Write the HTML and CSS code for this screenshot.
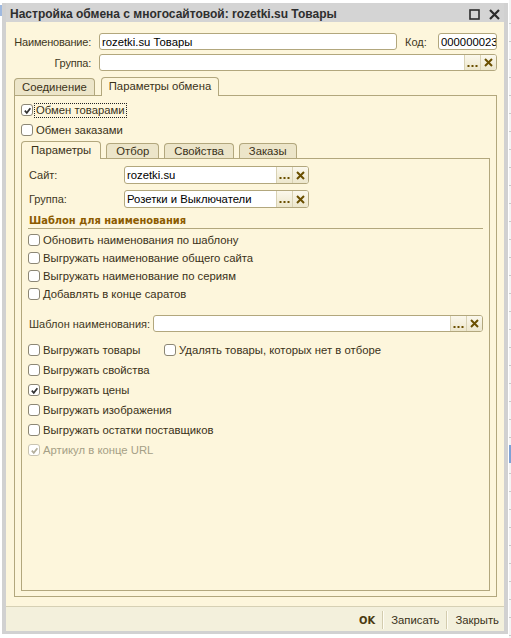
FILE: index.html
```html
<!DOCTYPE html>
<html>
<head>
  <title>Настройка обмена с многосайтовой</title>
  <link rel="stylesheet" href="styles.css">
</head>
<body>

  <svg class="defs" width="0" height="0">
    <symbol id="i-check" viewBox="0 0 10 10">
      <path d="M2 5.2 L4.2 7.6 L8.2 2.6" fill="none" stroke="currentColor" stroke-width="1.9"/>
    </symbol>
    <symbol id="i-dots" viewBox="0 0 11 10">
      <rect x="0.5" y="7" width="2" height="2"/>
      <rect x="4.5" y="7" width="2" height="2"/>
      <rect x="8.5" y="7" width="2" height="2"/>
    </symbol>
    <symbol id="i-clear" viewBox="0 0 9 9">
      <path d="M1 1 L8 8 M8 1 L1 8" fill="none" stroke="currentColor" stroke-width="2"/>
    </symbol>
  </svg>

  <div class="edge-left"><div class="edge-mark"></div></div>

  <div class="window">
    <div class="titlebar">
      <span class="title">Настройка обмена с многосайтовой: rozetki.su Товары</span>
      <span class="winbtns">
        <svg width="11" height="11" viewBox="0 0 11 11"><rect x="1" y="1" width="9" height="9" fill="none" stroke="#2b2b2b" stroke-width="1.6"/></svg>
        <svg width="11" height="11" viewBox="0 0 11 11"><path d="M1 1 L10 10 M10 1 L1 10" fill="none" stroke="#2b2b2b" stroke-width="2.2"/></svg>
      </span>
    </div>

    <div class="form">
      <div class="row">
        <span class="lbl">Наименование:</span>
        <div class="field grow"><span class="val">rozetki.su Товары</span></div>
        <span class="lbl-code">Код:</span>
        <div class="field code"><span class="val">000000023</span></div>
      </div>
      <div class="row">
        <span class="lbl">Группа:</span>
        <div class="field grow">
          <span class="val"></span>
          <span class="btn dots"><svg width="11" height="10"><use href="#i-dots"/></svg></span>
          <span class="btn clear"><svg width="9" height="9"><use href="#i-clear"/></svg></span>
        </div>
      </div>

      <div class="tabs">
        <div class="tab">Соединение</div>
        <div class="tab active">Параметры обмена</div>
      </div>

      <div class="panel">
        <div class="check">
          <span class="cb on"><svg width="10" height="10"><use href="#i-check"/></svg></span>
          <span class="cb-text focus">Обмен товарами</span>
        </div>
        <div class="check">
          <span class="cb"></span>
          <span class="cb-text">Обмен заказами</span>
        </div>

        <div class="tabs inner">
          <div class="tab active">Параметры</div>
          <div class="tab">Отбор</div>
          <div class="tab">Свойства</div>
          <div class="tab">Заказы</div>
        </div>

        <div class="subpanel">
          <div class="frow">
            <span class="lbl2">Сайт:</span>
            <div class="field site">
              <span class="val">rozetki.su</span>
              <span class="btn dots"><svg width="11" height="10"><use href="#i-dots"/></svg></span>
              <span class="btn clear"><svg width="9" height="9"><use href="#i-clear"/></svg></span>
            </div>
          </div>
          <div class="frow">
            <span class="lbl2">Группа:</span>
            <div class="field site">
              <span class="val">Розетки и Выключатели</span>
              <span class="btn dots"><svg width="11" height="10"><use href="#i-dots"/></svg></span>
              <span class="btn clear"><svg width="9" height="9"><use href="#i-clear"/></svg></span>
            </div>
          </div>

          <div class="section">Шаблон для наименования</div>

          <div class="checks tight">
            <div class="check">
              <span class="cb"></span>
              <span class="cb-text">Обновить наименования по шаблону</span>
            </div>
            <div class="check">
              <span class="cb"></span>
              <span class="cb-text">Выгружать наименование общего сайта</span>
            </div>
            <div class="check">
              <span class="cb"></span>
              <span class="cb-text">Выгружать наименование по сериям</span>
            </div>
            <div class="check">
              <span class="cb"></span>
              <span class="cb-text">Добавлять в конце саратов</span>
            </div>
          </div>

          <div class="frow template">
            <span class="lbl2 wide">Шаблон наименования:</span>
            <div class="field grow">
              <span class="val"></span>
              <span class="btn dots"><svg width="11" height="10"><use href="#i-dots"/></svg></span>
              <span class="btn clear"><svg width="9" height="9"><use href="#i-clear"/></svg></span>
            </div>
          </div>

          <div class="checks">
            <div class="check">
              <span class="check-col">
                <span class="cb"></span>
                <span class="cb-text">Выгружать товары</span>
              </span>
              <span class="cb"></span>
              <span class="cb-text">Удалять товары, которых нет в отборе</span>
            </div>
            <div class="check">
              <span class="cb"></span>
              <span class="cb-text">Выгружать свойства</span>
            </div>
            <div class="check">
              <span class="cb on"><svg width="10" height="10"><use href="#i-check"/></svg></span>
              <span class="cb-text">Выгружать цены</span>
            </div>
            <div class="check">
              <span class="cb"></span>
              <span class="cb-text">Выгружать изображения</span>
            </div>
            <div class="check">
              <span class="cb"></span>
              <span class="cb-text">Выгружать остатки поставщиков</span>
            </div>
            <div class="check disabled">
              <span class="cb on"><svg width="10" height="10"><use href="#i-check"/></svg></span>
              <span class="cb-text">Артикул в конце URL</span>
            </div>
          </div>
        </div>
      </div>
    </div>

    <div class="footer">
      <span class="fbtn ok">OK</span>
      <span class="fsep"></span>
      <span class="fbtn">Записать</span>
      <span class="fsep"></span>
      <span class="fbtn last">Закрыть</span>
    </div>
  </div>

  <div class="edge-right"><div class="edge-sel"></div></div>

</body>
</html>
```

FILE: styles.css
```css
body {
  margin: 0;
  background: #fff;
  font: 11px "Liberation Sans", Arial, sans-serif;
  color: #41381c;
  display: flex;
  height: 638px;
  overflow: hidden;
}

.defs {
  position: absolute;
}

/* desktop around the window */
.edge-left {
  width: 2px;
}

.edge-mark {
  margin-top: 5px;
  height: 11px;
  background: #9fb9e0;
}

.edge-right {
  flex: 1;
  margin-left: 1px;
  background: repeating-linear-gradient(to bottom, #f4f4f4 0, #f4f4f4 17px, #c9c9c9 17px, #c9c9c9 18px);
  background-position: 0 6px;
}

.edge-sel {
  margin-top: 445px;
  height: 18px;
  background: #7ea2d6;
}

/* window */
.window {
  width: 506px;
  height: 631px;
  margin-top: 3px;
  box-sizing: border-box;
  border: 4px solid #d1d1d1;
  border-top: 0;
  border-bottom-width: 3px;
  background: #fdf6dc;
  display: flex;
  flex-direction: column;
}

.titlebar {
  height: 19px;
  box-sizing: border-box;
  padding: 4px 4px 0 4px;
  background: #d4d4d4;
  display: flex;
  justify-content: space-between;
}

.title {
  font: bold 12px "Liberation Sans", Arial, sans-serif;
  color: #2e2e2e;
  line-height: 15px;
}

.winbtns {
  display: flex;
  align-items: center;
  gap: 9px;
  height: 15px;
}

.form {
  flex: 1;
  display: flex;
  flex-direction: column;
  padding: 11px 7px 9px 8px;
}

.row {
  display: flex;
  align-items: center;
  height: 17px;
  margin-bottom: 4px;
}

.lbl {
  width: 77px;
  margin-right: 8px;
  text-align: right;
  letter-spacing: -0.2px;
  white-space: nowrap;
}

.lbl-code {
  width: 25px;
  margin: 0 8px;
}

/* input boxes */
.field {
  height: 17px;
  box-sizing: border-box;
  background: #fff;
  border: 1px solid #b2a77d;
  border-radius: 3px;
  display: flex;
  align-items: stretch;
  overflow: hidden;
  color: #000;
  font-size: 11.3px;
}

.field.grow {
  flex: 1;
}

.field.code {
  width: 59px;
}

.field.site {
  width: 185px;
  height: 18px;
}

.val {
  flex: 1;
  padding-left: 2px;
  white-space: nowrap;
  overflow: hidden;
  display: flex;
  align-items: center;
}

.btn {
  width: 15px;
  display: flex;
  align-items: center;
  justify-content: center;
  background: linear-gradient(#fbf8ec, #ede7cd);
  border-left: 1px solid #d9d2b4;
  color: #6a4f00;
  fill: #6a4f00;
}

/* tabs */
.tabs {
  display: flex;
  align-items: flex-end;
  gap: 6px;
  height: 18px;
  margin-top: 2px;
}

.tab {
  height: 17px;
  box-sizing: border-box;
  padding: 0 7px;
  border: 1px solid #b2a77d;
  border-bottom: 0;
  border-radius: 4px 4px 0 0;
  background: #ece5c9;
  line-height: 16px;
  font-size: 11.3px;
  color: #3a3118;
}

.tab.active {
  height: 19px;
  margin-bottom: -1px;
  background: #fdf6dc;
  position: relative;
  line-height: 17px;
}

.tabs.inner {
  height: 17px;
  margin-top: 1px;
  gap: 5px;
}

.tabs.inner .tab {
  height: 15px;
  padding: 0 9px;
  line-height: 14px;
}

.tabs.inner .tab.active {
  height: 18px;
  line-height: 16px;
}

.panel {
  flex: 1;
  border: 1px solid #b2a77d;
  padding: 4px 6px 5px 6px;
  display: flex;
  flex-direction: column;
}

.subpanel {
  flex: 1;
  border: 1px solid #b2a77d;
  padding: 7px 6px 0 6px;
}

/* checkboxes */
.check {
  display: flex;
  align-items: center;
  height: 20px;
  font-size: 11.3px;
  color: #3a3118;
}

.checks.tight .check {
  height: 18px;
}

.check-col {
  width: 136px;
  display: flex;
  align-items: center;
}

.cb {
  width: 12px;
  height: 12px;
  box-sizing: border-box;
  border: 1px solid #8c8775;
  border-radius: 3px;
  background: #fff;
  margin-right: 1px;
  display: flex;
  align-items: center;
  justify-content: center;
  color: #333;
}

.cb svg {
  width: 9px;
  height: 9px;
}

.cb-text {
  border: 1px dotted transparent;
  padding: 0 1px;
  line-height: 13px;
  white-space: nowrap;
}

.cb-text.focus {
  border-color: #222;
}

.check.disabled {
  color: #a59f86;
}

.check.disabled .cb {
  border-color: #c9c4b2;
  color: #b3ae9b;
}

/* sub panel rows */
.frow {
  display: flex;
  align-items: center;
  height: 18px;
  margin-bottom: 6px;
}

.lbl2 {
  width: 95px;
  padding-left: 1px;
  white-space: nowrap;
}

.lbl2.wide {
  width: 124px;
}

.frow.template {
  height: 17px;
  margin: 12px 0 8px 0;
}

.section {
  height: 14px;
  line-height: 14px;
  padding-left: 1px;
  margin-bottom: 2px;
  border-bottom: 1px solid #b2a77d;
  font: bold 11px "DejaVu Sans Condensed", "DejaVu Sans", sans-serif;
  color: #8c5b00;
}

/* bottom buttons */
.footer {
  height: 25px;
  box-sizing: border-box;
  border-top: 1px solid #d6d0b4;
  background: #f3f0dc;
  display: flex;
  justify-content: flex-end;
  align-items: center;
  padding: 2px 5px 0 0;
}

.fbtn {
  padding: 0 7px;
  font-size: 11.3px;
  color: #3a3118;
}

.fbtn.ok {
  font: bold 11px "DejaVu Sans Condensed", "DejaVu Sans", sans-serif;
  color: #4a3a10;
}

.fbtn.last {
  padding-right: 0;
}

.fsep {
  width: 1px;
  height: 18px;
  background: #d3ccae;
  border-right: 1px solid #fffdf3;
}
```
